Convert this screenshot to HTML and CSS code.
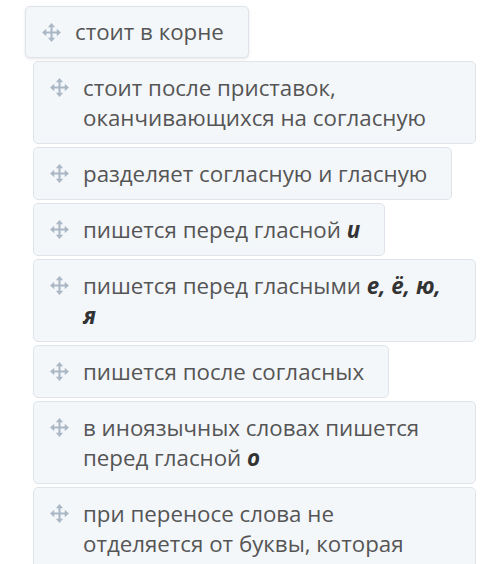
FILE: index.html
```html
<!DOCTYPE html>
<html lang="ru">
<head>
<meta charset="utf-8">
<link rel="stylesheet" href="styles.css">
</head>
<body>
<div class="list">
  <div class="item first"><span class="grip"><svg viewBox="0 0 20 20"><path d="M10 1 L13.5 5 H11 V9 H15 V6.5 L19 10 L15 13.5 V11 H11 V15 H13.5 L10 19 L6.5 15 H9 V11 H5 V13.5 L1 10 L5 6.5 V9 H9 V5 H6.5 Z"/></svg></span><span class="txt">стоит в корне</span></div>
  <div class="item"><span class="grip"><svg viewBox="0 0 20 20"><path d="M10 1 L13.5 5 H11 V9 H15 V6.5 L19 10 L15 13.5 V11 H11 V15 H13.5 L10 19 L6.5 15 H9 V11 H5 V13.5 L1 10 L5 6.5 V9 H9 V5 H6.5 Z"/></svg></span><span class="txt">стоит после приставок, оканчивающихся на согласную</span></div>
  <div class="item"><span class="grip"><svg viewBox="0 0 20 20"><path d="M10 1 L13.5 5 H11 V9 H15 V6.5 L19 10 L15 13.5 V11 H11 V15 H13.5 L10 19 L6.5 15 H9 V11 H5 V13.5 L1 10 L5 6.5 V9 H9 V5 H6.5 Z"/></svg></span><span class="txt">разделяет согласную и гласную</span></div>
  <div class="item"><span class="grip"><svg viewBox="0 0 20 20"><path d="M10 1 L13.5 5 H11 V9 H15 V6.5 L19 10 L15 13.5 V11 H11 V15 H13.5 L10 19 L6.5 15 H9 V11 H5 V13.5 L1 10 L5 6.5 V9 H9 V5 H6.5 Z"/></svg></span><span class="txt">пишется перед гласной <b>и</b></span></div>
  <div class="item"><span class="grip"><svg viewBox="0 0 20 20"><path d="M10 1 L13.5 5 H11 V9 H15 V6.5 L19 10 L15 13.5 V11 H11 V15 H13.5 L10 19 L6.5 15 H9 V11 H5 V13.5 L1 10 L5 6.5 V9 H9 V5 H6.5 Z"/></svg></span><span class="txt">пишется перед гласными <b>е, ё, ю, я</b></span></div>
  <div class="item"><span class="grip"><svg viewBox="0 0 20 20"><path d="M10 1 L13.5 5 H11 V9 H15 V6.5 L19 10 L15 13.5 V11 H11 V15 H13.5 L10 19 L6.5 15 H9 V11 H5 V13.5 L1 10 L5 6.5 V9 H9 V5 H6.5 Z"/></svg></span><span class="txt">пишется после согласных</span></div>
  <div class="item"><span class="grip"><svg viewBox="0 0 20 20"><path d="M10 1 L13.5 5 H11 V9 H15 V6.5 L19 10 L15 13.5 V11 H11 V15 H13.5 L10 19 L6.5 15 H9 V11 H5 V13.5 L1 10 L5 6.5 V9 H9 V5 H6.5 Z"/></svg></span><span class="txt">в иноязычных словах пишется перед гласной <b>о</b></span></div>
  <div class="item"><span class="grip"><svg viewBox="0 0 20 20"><path d="M10 1 L13.5 5 H11 V9 H15 V6.5 L19 10 L15 13.5 V11 H11 V15 H13.5 L10 19 L6.5 15 H9 V11 H5 V13.5 L1 10 L5 6.5 V9 H9 V5 H6.5 Z"/></svg></span><span class="txt">при переносе слова не отделяется от буквы, которая стоит перед ним</span></div>
</div>
</body>
</html>
```
FILE: styles.css
```css
html, body {
  margin: 0;
  padding: 0;
  background: #ffffff;
  overflow: hidden;
}
body {
  font-family: "Open Sans", "Noto Sans", sans-serif;
  color: #555555;
}
.list {
  display: flex;
  flex-direction: column;
  align-items: flex-start;
  gap: 3px;
  padding: 6px 0 0 33px;
}
.item {
  box-sizing: border-box;
  display: flex;
  align-items: flex-start;
  max-width: 443px;
  background: #f4f7fa;
  border: 1px solid #dfe4ea;
  border-radius: 5px;
  padding: 10.5px 24px 10.5px 15px;
  font-size: 22.3px;
  line-height: 30px;
}
.item.first {
  margin-left: -8px;
  box-shadow: 0 1px 3px rgba(0, 0, 0, 0.10);
  padding-top: 10px;
  padding-bottom: 10px;
}
.grip {
  flex: none;
  width: 21px;
  height: 30px;
  display: flex;
  align-items: center;
  margin-right: 13px;
}
.grip svg {
  width: 21px;
  height: 21px;
  fill: #aab8c5;
}
.txt b {
  font-weight: 700;
  font-style: italic;
  color: #333333;
}
```
